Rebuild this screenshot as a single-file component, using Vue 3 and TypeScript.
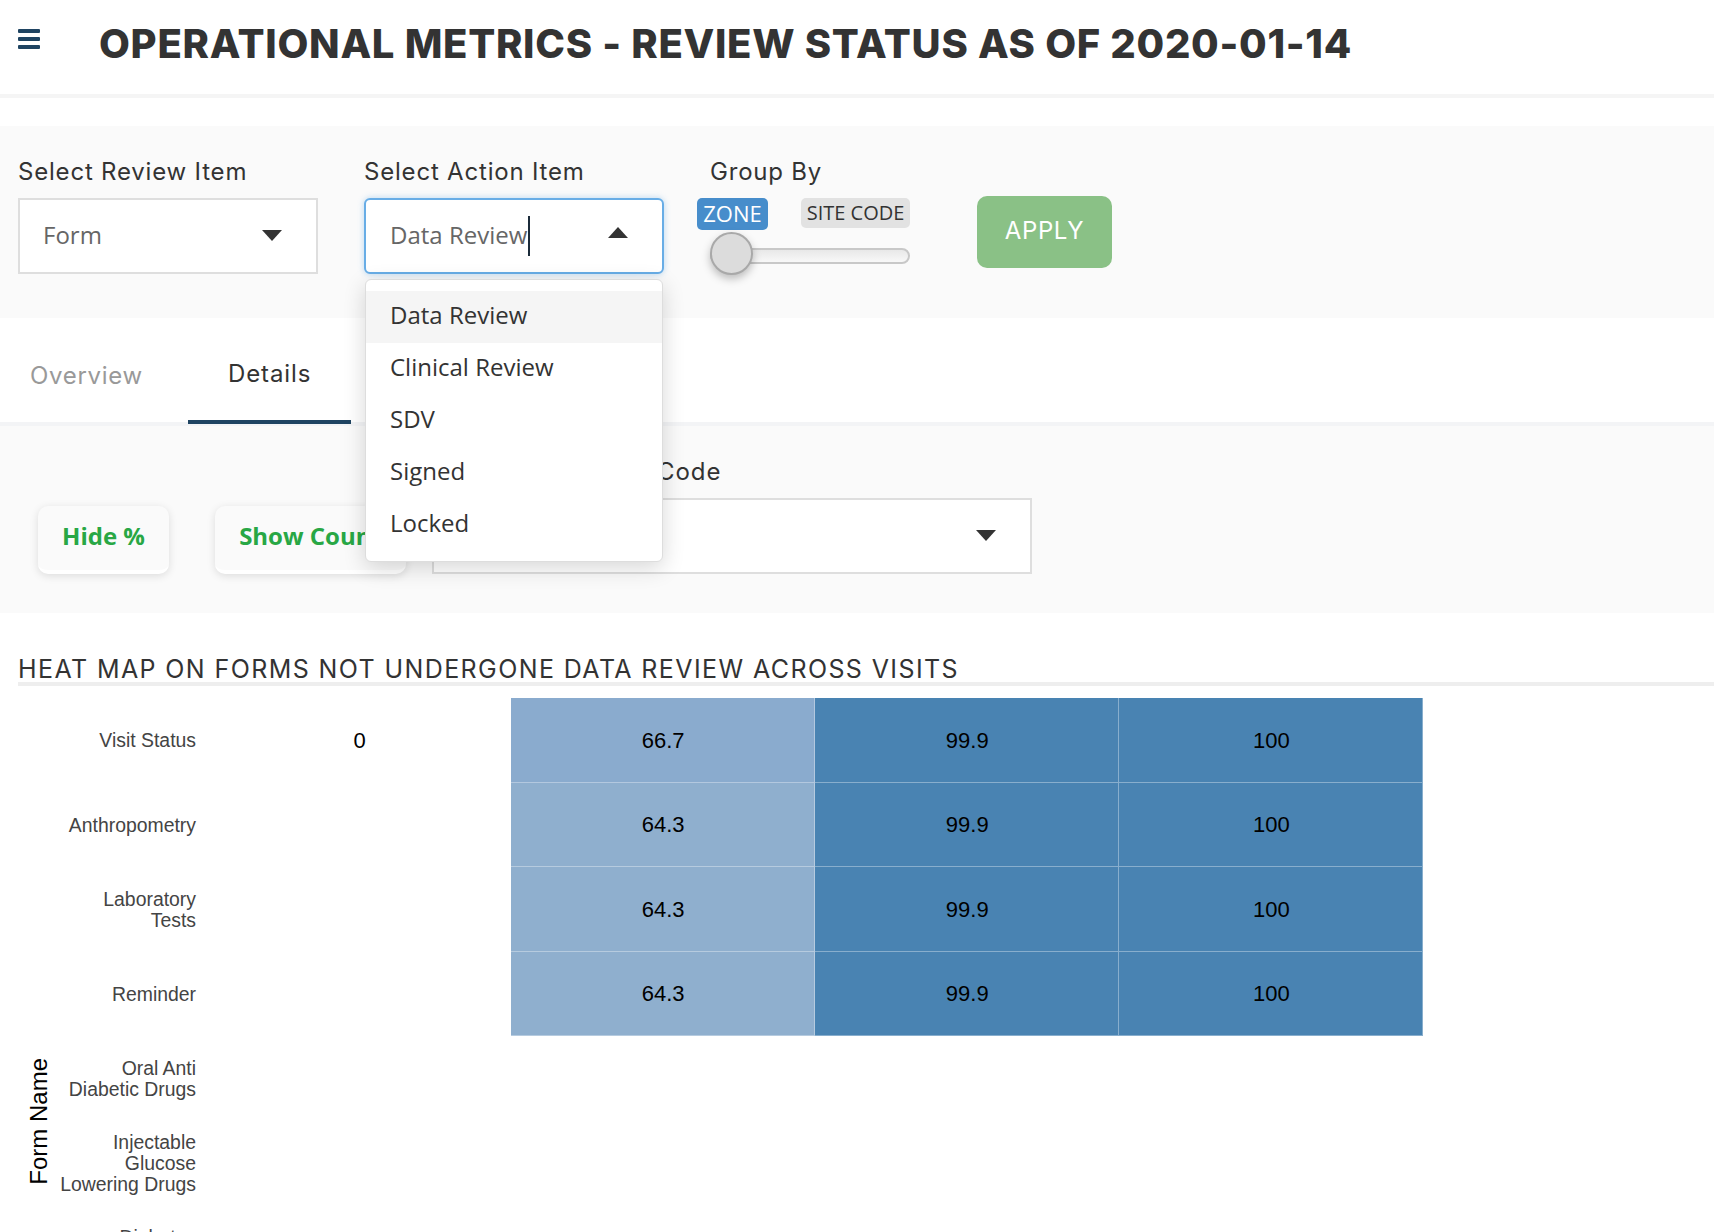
<script setup lang="ts">
import { ref } from 'vue'

interface HeatRow {
  label: string
  values: (number | null)[]
}

const actionItems = ['Data Review', 'Clinical Review', 'SDV', 'Signed', 'Locked']
const activeAction = ref('Data Review')

const rows: HeatRow[] = [
  { label: 'Visit Status', values: [0, 66.7, 99.9, 100] },
  { label: 'Anthropometry', values: [null, 64.3, 99.9, 100] },
  { label: 'Laboratory\nTests', values: [null, 64.3, 99.9, 100] },
  { label: 'Reminder', values: [null, 64.3, 99.9, 100] },
  { label: 'Oral Anti\nDiabetic Drugs', values: [null, null, null, null] },
  { label: 'Injectable\nGlucose\nLowering Drugs', values: [null, null, null, null] },
  { label: 'Diabetes\nHistory', values: [null, null, null, null] },
]

function cellClass(value: number | null) {
  if (value === null || value === 0) return ''
  return value > 90 ? 'cell--dark' : value > 65 ? 'cell--mid' : 'cell--light'
}
</script>

<template>
  <div class="page">
    <header class="topbar">
      <svg class="menu-icon" viewBox="0 0 22 20" width="22" height="20" aria-hidden="true">
        <rect x="0" y="0" width="22" height="4" rx="1" />
        <rect x="0" y="8" width="22" height="4" rx="1" />
        <rect x="0" y="16" width="22" height="4" rx="1" />
      </svg>
      <h1 class="title">OPERATIONAL METRICS - REVIEW STATUS AS OF 2020-01-14</h1>
    </header>

    <section class="filters">
      <div class="field field--review">
        <label class="field-label">Select Review Item</label>
        <div class="select">
          <span class="select-value">Form</span>
          <span class="arrow arrow--down" />
        </div>
      </div>

      <div class="field field--action">
        <label class="field-label">Select Action Item</label>
        <div class="select select--open">
          <span class="select-value">Data Review</span>
          <span class="text-caret" />
          <span class="arrow arrow--up" />
        </div>
        <ul class="dropdown">
          <li
            v-for="item in actionItems"
            :key="item"
            class="dropdown-item"
            :class="{ 'dropdown-item--active': item === activeAction }"
          >
            {{ item }}
          </li>
        </ul>
      </div>

      <div class="group-by">
        <label class="field-label group-label">Group By</label>
        <div class="tags">
          <span class="tag tag--on">ZONE</span>
          <span class="tag tag--off">SITE CODE</span>
        </div>
        <div class="slider">
          <div class="slider-track" />
          <div class="slider-handle" />
        </div>
      </div>

      <button type="button" class="apply">APPLY</button>
    </section>

    <nav class="tabs">
      <div class="tab tab--overview">Overview</div>
      <div class="tab tab--details">Details</div>
    </nav>

    <section class="details-bar">
      <button type="button" class="pill pill--hide">Hide %</button>
      <button type="button" class="pill pill--count">Show Count</button>
      <div class="field field--site">
        <label class="field-label">Select Zone / Site Code</label>
        <div class="select">
          <span class="arrow arrow--down" />
        </div>
      </div>
    </section>

    <h2 class="heat-title">HEAT MAP ON FORMS NOT UNDERGONE DATA REVIEW ACROSS VISITS</h2>

    <div class="heatmap">
      <span class="axis-title">Form Name</span>
      <template v-for="row in rows" :key="row.label">
        <div class="row-label">{{ row.label }}</div>
        <div
          v-for="(value, index) in row.values"
          :key="index"
          class="cell"
          :class="cellClass(value)"
        >
          {{ value }}
        </div>
      </template>
    </div>
  </div>
</template>

<style scoped>
.page {
  height: 1232px;
  overflow: hidden;
  background: #fff;
  color: #333;
}

.topbar {
  display: flex;
  align-items: center;
  height: 94px;
  padding-left: 18px;
  border-bottom: 4px solid #f5f5f5;
  box-sizing: content-box;
}

.menu-icon {
  flex: none;
  margin-top: -17px;
  fill: #1f4462;
}

.title {
  margin: -8px 0 0 59px;
  font-family: Inter, "Open Sans", sans-serif;
  font-size: 40px;
  font-weight: 800;
  letter-spacing: 0.7px;
  white-space: nowrap;
  color: #333;
}

.filters {
  display: flex;
  align-items: flex-start;
  height: 192px;
  margin-top: 28px;
  padding: 31px 0 0 18px;
  box-sizing: border-box;
  background: #fafafa;
}

.field {
  position: relative;
  flex: none;
}

.field--review {
  width: 300px;
}

.field--action {
  width: 300px;
  margin-left: 46px;
}

.field--site {
  width: 600px;
  margin-left: 26px;
}

.field-label {
  display: block;
  height: 30px;
  margin-bottom: 11px;
  font-family: Inter, "Open Sans", sans-serif;
  font-size: 24px;
  line-height: 30px;
  letter-spacing: 0.8px;
  white-space: nowrap;
  color: #333;
}

.field--site .field-label {
  letter-spacing: 0.95px;
}

.select {
  position: relative;
  display: flex;
  align-items: center;
  height: 76px;
  padding: 0 0 4px 23px;
  box-sizing: border-box;
  border: 2px solid #dedede;
  background: #fff;
}

.select--open {
  padding-left: 24px;
  border-color: #68ade6;
  border-radius: 6px;
  box-shadow: 0 0 6px rgb(104 173 230 / 0.45);
}

.select-value {
  font-family: "Open Sans", sans-serif;
  font-size: 24px;
  color: #666;
}

.text-caret {
  width: 2px;
  height: 40px;
  margin: 4px 0 0 1px;
  background: #1b2b3a;
}

.arrow {
  position: absolute;
  top: 50%;
  right: 34px;
  width: 0;
  height: 0;
  border-left: 10px solid transparent;
  border-right: 10px solid transparent;
}

.arrow--down {
  margin-top: -6px;
  border-top: 11px solid #333;
}

.arrow--up {
  margin-top: -9px;
  border-bottom: 11px solid #333;
}

.dropdown {
  position: absolute;
  top: 122px;
  left: 1px;
  z-index: 5;
  width: 298px;
  margin: 0;
  padding: 11px 0 10px;
  box-sizing: border-box;
  list-style: none;
  border: 1px solid #ddd;
  border-radius: 6px;
  background: #fff;
  box-shadow: 0 6px 22px rgb(0 0 0 / 0.16);
}

.dropdown-item {
  height: 52px;
  padding-left: 24px;
  font-family: "Open Sans", sans-serif;
  font-size: 24px;
  line-height: 48px;
  color: #333;
}

.dropdown-item--active {
  background: #f5f5f5;
}

.group-by {
  flex: none;
  width: 213px;
  margin-left: 33px;
}

.group-label {
  margin-left: 13px;
}

.tags {
  display: flex;
  align-items: flex-start;
  gap: 33px;
}

.tag {
  display: flex;
  align-items: center;
  justify-content: center;
  padding-bottom: 3px;
  box-sizing: border-box;
  font-family: "Open Sans", sans-serif;
  border-radius: 5px;
}

.tag--on {
  width: 71px;
  height: 32px;
  background: #478dcb;
  font-size: 22px;
  color: #fff;
}

.tag--off {
  width: 109px;
  height: 30px;
  padding-bottom: 2px;
  background: #e2e2e2;
  font-size: 20px;
  color: #333;
}

.slider {
  position: relative;
  width: 200px;
  height: 43px;
  margin: 2px 0 0 13px;
  padding-top: 16px;
  box-sizing: border-box;
}

.slider-track {
  height: 16px;
  box-sizing: border-box;
  border: 2px solid #c8c8c8;
  border-radius: 8px;
  background: linear-gradient(#e8e8e8, #f8f8f8);
}

.slider-handle {
  position: absolute;
  top: 0;
  left: 0;
  width: 43px;
  height: 43px;
  box-sizing: border-box;
  border: 2px solid #a9a9a9;
  border-radius: 50%;
  background: #dcdcdc;
  box-shadow: 0 4px 8px rgb(0 0 0 / 0.25);
}

.apply {
  flex: none;
  width: 135px;
  height: 72px;
  margin: 39px 0 0 67px;
  padding-bottom: 4px;
  border: 0;
  border-radius: 10px;
  background: #8ac186;
  font-family: Inter, "Open Sans", sans-serif;
  font-size: 24px;
  letter-spacing: 0.6px;
  color: #fff;
}

.tabs {
  display: flex;
  height: 104px;
  font-family: Inter, "Open Sans", sans-serif;
  font-size: 24px;
  letter-spacing: 0.7px;
}

.tab {
  display: flex;
  align-items: center;
  box-sizing: border-box;
}

.tab--overview {
  width: 188px;
  padding: 10px 0 0 30px;
  color: #999;
}

.tab--details {
  position: relative;
  z-index: 1;
  width: 163px;
  height: 106px;
  padding: 8px 0 0 40px;
  border-bottom: 4px solid #1f4462;
  letter-spacing: 0.9px;
  color: #333;
}

.details-bar {
  display: flex;
  align-items: flex-start;
  height: 191px;
  padding: 31px 0 0 38px;
  box-sizing: border-box;
  border-top: 4px solid #f3f4f6;
  background: #fafafa;
}

.pill {
  flex: none;
  height: 68px;
  margin-top: 49px;
  padding: 0 0 6px;
  border: 0;
  border-bottom: 4px solid #fff;
  border-radius: 10px;
  background: #fafafa;
  box-shadow: 0 2px 8px rgb(0 0 0 / 0.12);
  font-family: "Open Sans", sans-serif;
  font-size: 24px;
  font-weight: 700;
  color: #28a745;
}

.pill--hide {
  width: 131px;
}

.pill--count {
  width: 191px;
  margin-left: 46px;
  white-space: nowrap;
}

.heat-title {
  height: 28px;
  margin: 41px 0 0 18px;
  border-bottom: 4px solid #eee;
  font-family: Inter, "Open Sans", sans-serif;
  font-size: 25px;
  font-weight: 400;
  line-height: 30px;
  letter-spacing: 1.4px;
  white-space: nowrap;
  color: #333;
  box-sizing: content-box;
}

.heatmap {
  position: relative;
  display: grid;
  grid-template-columns: 207px repeat(4, 304.1px);
  grid-auto-rows: 84.5px;
  margin-top: 12px;
  font-family: "Liberation Sans", Arial, sans-serif;
}

.axis-title {
  position: absolute;
  top: 360px;
  left: 26px;
  writing-mode: vertical-rl;
  transform: rotate(180deg);
  font-size: 24px;
  line-height: 26px;
  color: #000;
}

.row-label {
  display: flex;
  align-items: center;
  justify-content: flex-end;
  padding: 1px 11px 0 0;
  font-size: 19.4px;
  line-height: 21px;
  text-align: right;
  white-space: pre-line;
  color: #444;
}

.cell {
  display: flex;
  align-items: center;
  justify-content: center;
  padding: 2px 0 0 1px;
  box-sizing: border-box;
  font-size: 22px;
  color: #000;
}

.cell--light,
.cell--mid,
.cell--dark {
  border-right: 1px solid rgb(255 255 255 / 0.35);
  border-bottom: 1px solid rgb(255 255 255 / 0.35);
}

.cell--light {
  background: #8fafce;
}

.cell--mid {
  background: #8aabce;
}

.cell--dark {
  background: #4983b2;
}
</style>

<style>
html,
body {
  margin: 0;
  background: #fff;
}
</style>
